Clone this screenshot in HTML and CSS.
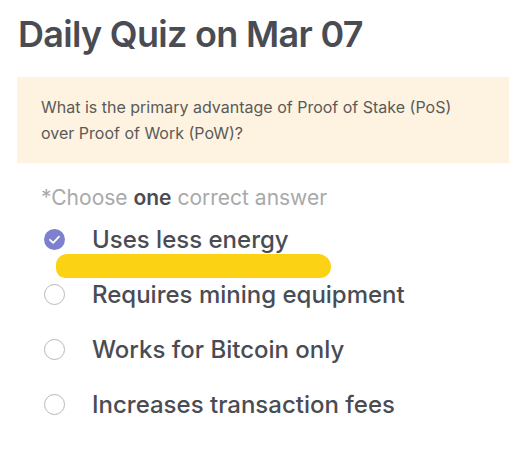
FILE: index.html
```html
<!DOCTYPE html>
<html lang="en">
<head>
    <meta charset="UTF-8">
    <meta name="viewport" content="width=device-width, initial-scale=1.0">
    <title>Daily Quiz</title>
    <link rel="stylesheet" href="styles.css">
</head>
<body>
    <div class="quiz">
        <h1 class="quiz-title">Daily Quiz on Mar 07</h1>
        <div class="question">
            What is the primary advantage of Proof of Stake (PoS)<br>over Proof of Work (PoW)?
        </div>
        <p class="hint">*Choose <b>one</b> correct answer</p>
        <ul class="options">
            <li class="option checked">
                <span class="radio">
                    <svg width="21" height="21" viewBox="0 0 21 21">
                        <circle cx="10.5" cy="10.5" r="10.5" fill="#7d80cf"/>
                        <path d="M6 10.8 L9.2 13.8 L15 7.6" fill="none" stroke="#fff" stroke-width="1.8" stroke-linecap="round" stroke-linejoin="round"/>
                    </svg>
                </span>
                <span class="label">Uses less energy</span>
                <span class="marker"></span>
            </li>
            <li class="option">
                <span class="radio"></span>
                <span class="label">Requires mining equipment</span>
            </li>
            <li class="option">
                <span class="radio"></span>
                <span class="label">Works for Bitcoin only</span>
            </li>
            <li class="option">
                <span class="radio"></span>
                <span class="label">Increases transaction fees</span>
            </li>
        </ul>
    </div>
</body>
</html>
```

FILE: styles.css
```css
body {
  margin: 0;
  background-color: #fff;
  font-family: Inter, "Open Sans", sans-serif;
  color: #4a4c54;
}

.quiz {
  padding: 12px 17px 0 17px;
}

.quiz-title {
  margin: 0 0 0 1px;
  font-size: 36px;
  font-weight: 600;
  line-height: 44px;
  color: #4a4c54;
  letter-spacing: -0.7px;
}

.question {
  margin-top: 21px;
  background-color: #fdf3e0;
  padding: 17px 24px 18px 24px;
  font-size: 16px;
  line-height: 26px;
  color: #5a5a5a;
  height: 51px;
}

.hint {
  margin: 23px 0 0 24px;
  font-size: 21px;
  line-height: 24px;
  color: #a9a9a9;
}

.hint b {
  font-weight: 600;
  color: #4a4c54;
}

.options {
  list-style: none;
  margin: 12px 0 0 0;
  padding: 0;
}

.option {
  position: relative;
  display: flex;
  align-items: center;
  height: 35px;
  padding-left: 27px;
}

.option + .option {
  margin-top: 20px;
}

.radio {
  display: block;
  width: 21px;
  height: 21px;
  box-sizing: border-box;
  border: 1.5px solid #b8b8b8;
  border-radius: 50%;
  flex-shrink: 0;
}

.option.checked .radio {
  border: none;
}

.radio svg {
  display: block;
}

.label {
  margin-left: 27px;
  font-size: 24px;
  font-weight: 500;
  color: #4a4c54;
}

.marker {
  position: absolute;
  left: 39px;
  top: 32px;
  width: 275px;
  height: 24px;
  background-color: #fbd214;
  border-radius: 12px 14px 12px 10px;
}
```
